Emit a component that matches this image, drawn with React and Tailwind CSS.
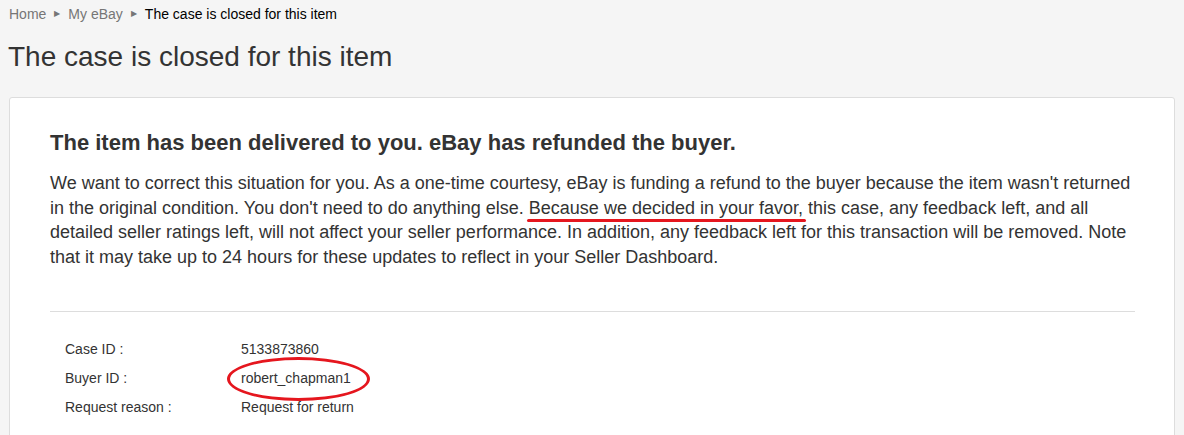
export default function App() {
    return (
        <div className="min-h-[435px] bg-[#f5f5f5] text-[#333]" style={{ fontFamily: '"Liberation Sans", Arial, sans-serif' }}>
            {/* breadcrumb */}
            <div className="flex items-center pl-[9px] pt-[5px] text-[14px] leading-[18px]">
                <span className="text-[#767676]">Home</span>
                <span className="mx-[8px] text-[8px] text-[#767676]">▶</span>
                <span className="text-[#767676]">My eBay</span>
                <span className="mx-[8px] text-[8px] text-[#767676]">▶</span>
                <span className="text-black">The case is closed for this item</span>
            </div>

            <h1 className="pl-[8px] pt-[18px] text-[28px] leading-[32px] font-normal">
                The case is closed for this item
            </h1>

            {/* card */}
            <div className="mx-[9px] mt-[24px] h-[400px] rounded-[3px] border border-[#ddd] bg-white pl-[40px] pr-[39px] pt-[32px]">
                <h2 className="text-[22px] font-bold leading-[26px]">
                    The item has been delivered to you. eBay has refunded the buyer.
                </h2>
                <p className="mt-[15px] w-[1088px] text-[18px] leading-[24.5px]">
                    We want to correct this situation for you. As a one-time courtesy, eBay is funding a refund to the buyer because the item wasn't returned in the original condition. You don't need to do anything else.{" "}
                    <span className="relative">
                        Because we decided in your favor,
                        <span className="absolute left-[-2px] right-[-3px] bottom-[-4px] h-[3px] rounded-full bg-[#e5161e]" />
                    </span>{" "}
                    this case, any feedback left, and all detailed seller ratings left, will not affect your seller performance. In addition, any feedback left for this transaction will be removed. Note that it may take up to 24 hours for these updates to reflect in your Seller Dashboard.
                </p>

                <div className="mt-[42px] border-t border-[#ddd] pl-[15px] pt-[23px] text-[14px] leading-[29px]">
                    <div className="flex">
                        <span className="w-[176px]">Case ID :</span>
                        <span>5133873860</span>
                    </div>
                    <div className="flex">
                        <span className="w-[176px]">Buyer ID :</span>
                        <span className="relative inline-block">
                            robert_chapman1
                            <span className="absolute left-[-14px] right-[-19px] top-[-7px] bottom-[-8px] rounded-[50%] border-[3px] border-[#e5161e]" />
                        </span>
                    </div>
                    <div className="flex">
                        <span className="w-[176px]">Request reason :</span>
                        <span>Request for return</span>
                    </div>
                </div>
            </div>
        </div>
    );
}
